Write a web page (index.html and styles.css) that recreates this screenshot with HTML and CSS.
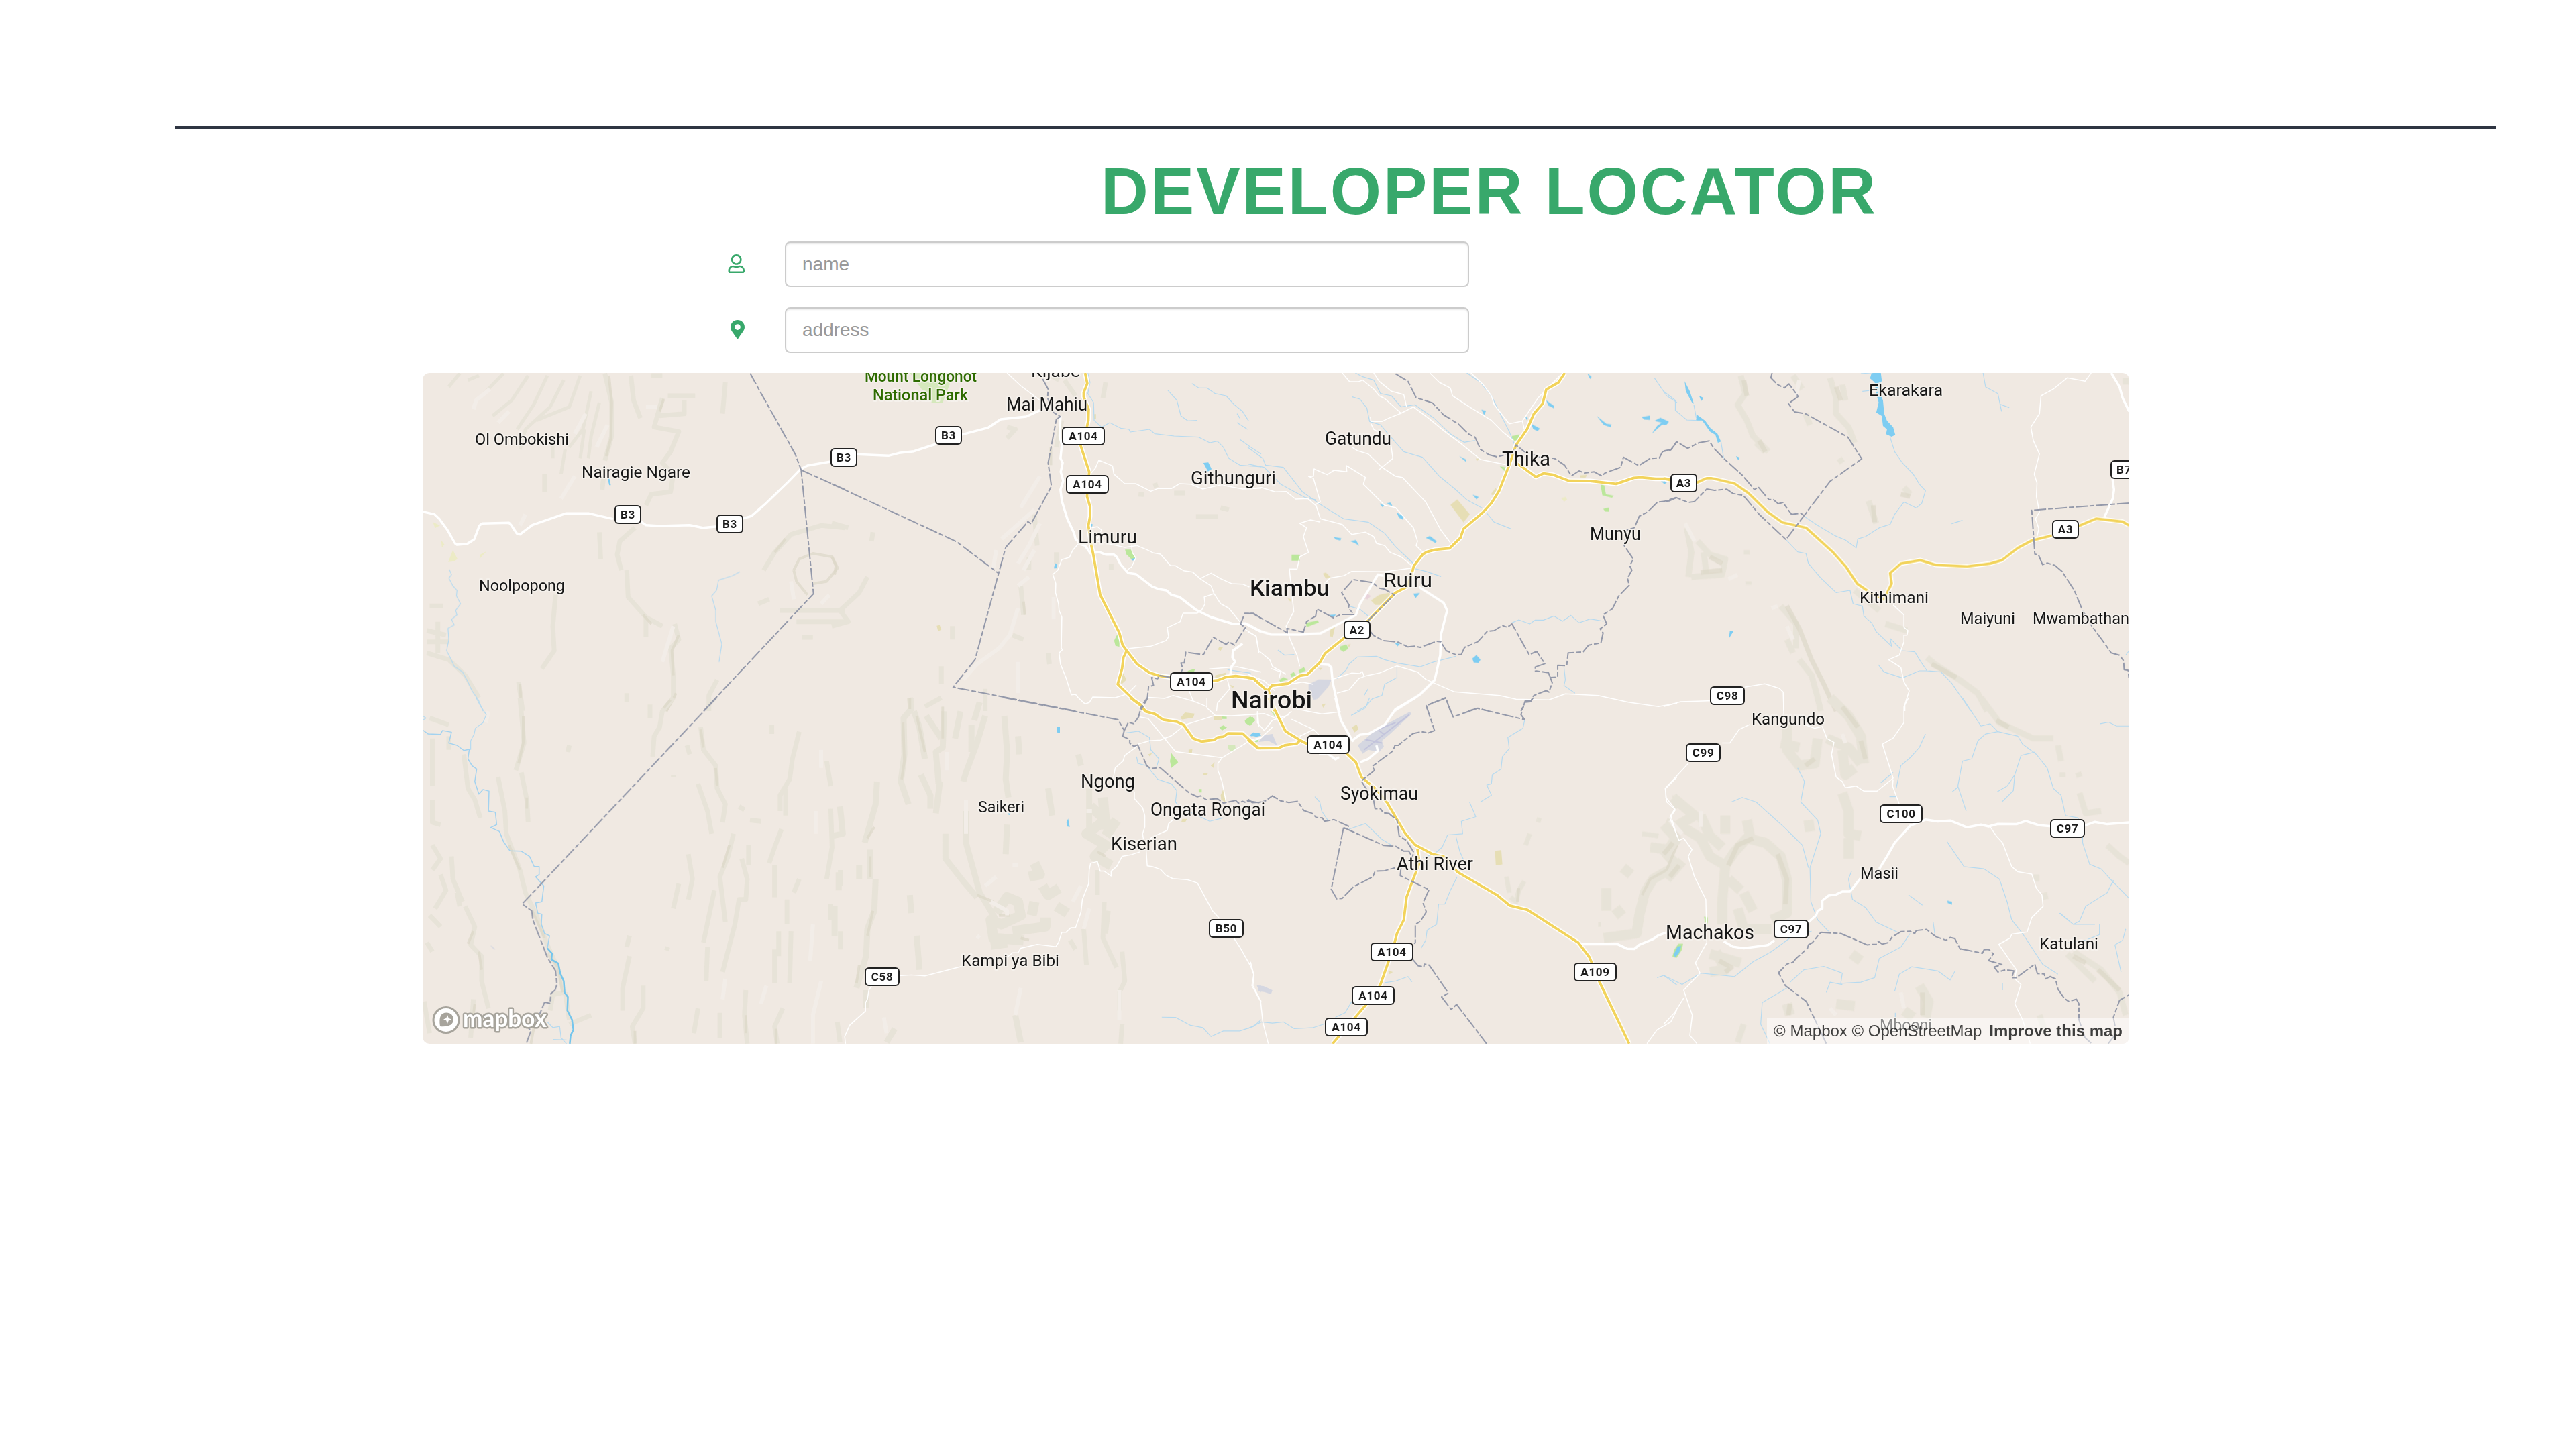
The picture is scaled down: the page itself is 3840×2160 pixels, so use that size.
FILE: index.html
```html
<!DOCTYPE html>
<html lang="en">
<head>
<meta charset="utf-8">
<title>Developer Locator</title>
<link rel="stylesheet" href="styles.css">
</head>
<body>
<header class="topbar"></header>
<main class="locator">
<h1 class="title">DEVELOPER LOCATOR</h1>
<form class="form">
  <label class="row">
    <svg class="icon" viewBox="0 0 448 512" preserveAspectRatio="xMaxYMid meet"><path d="M313.6 304c-28.700 0-42.500 16-89.600 16-47.100 0-60.800-16-89.600-16C60.200 304 0 364.200 0 438.400V464c0 26.500 21.500 48 48 48h352c26.500 0 48-21.500 48-48v-25.600c0-74.200-60.200-134.400-134.400-134.400zM400 464H48v-25.600c0-47.600 38.800-86.400 86.400-86.400 14.600 0 38.300 16 89.600 16 51.700 0 74.900-16 89.600-16 47.600 0 86.400 38.800 86.400 86.400V464zM224 288c79.500 0 144-64.500 144-144S303.500 0 224 0 80 64.500 80 144s64.500 144 144 144zm0-240c52.900 0 96 43.100 96 96s-43.100 96-96 96-96-43.100-96-96 43.100-96 96-96z"/></svg>
    <input class="field" type="text" placeholder="name">
  </label>
  <label class="row">
    <svg class="icon" viewBox="0 0 384 512" preserveAspectRatio="xMaxYMid meet"><path d="M172.268 501.670C26.970 291.031 0 269.413 0 192 0 85.961 85.961 0 192 0s192 85.961 192 192c0 77.413-26.970 99.031-172.268 309.670-9.535 13.774-29.930 13.773-39.464 0zM192 272c44.183 0 80-35.817 80-80s-35.817-80-80-80-80 35.817-80 80 35.817 80 80 80z"/></svg>
    <input class="field" type="text" placeholder="address">
  </label>
</form>
<section class="map">
<svg class="canvas" viewBox="630 556 2544 1000">
<defs>
  <g id="s2"><rect x="-19" y="-13" width="38" height="26" rx="5"/></g>
  <g id="s3"><rect x="-25" y="-13" width="50" height="26" rx="5"/></g>
  <g id="s4"><rect x="-31" y="-13" width="62" height="26" rx="5"/></g>
</defs>

<!-- hillshade -->
<g class="hills">
 <g transform="translate(620 540) scale(.40816 .33333)">
  <path class="w3" d="M320 50L240 150M410 60L350 170L280 240M480 60L430 190L370 300M540 80L490 200L400 300L380 390M600 60L560 200L440 260M640 130L610 300L560 380M670 180L640 330L630 430M160 50L120 110M230 60L190 80M500 350L500 430M545 390L530 500M615 300L600 430"/>
  <path class="w4" d="M690 50L715 180L715 330L690 440M785 60L795 170L820 250M900 160L870 290L960 310L930 400L900 450L940 500L930 580L860 590L840 640M920 150L1020 150M860 60L900 60M980 170L980 230L880 240M690 470L680 570M800 740L745 800L735 860L750 930M770 930L775 1050L840 1140L840 1230M840 1140L900 1180M670 760L675 880M470 500L470 580M510 1040L500 1180L505 1290L460 1370M375 1430L390 1560M1130 90L1120 230"/>
  <path class="w4" d="M945 1170L960 1240L930 1280L940 1400L940 1500L910 1560M1100 1420L1070 1490L1070 1560M1270 930L1310 850L1370 770L1480 730L1568 740M1250 1080L1290 1060M1330 1110L1568 1110M1390 1160L1568 1160M1410 1230L1450 1230M50 1090L100 1090M40 1200L110 1220M40 1250L120 1250M40 1300L120 1330L180 1400L230 1500M80 1160L80 1300M770 1480L770 1520"/>
  <path class="d4" d="M705 60L715 180L712 340L695 420M905 165L890 220M1380 930L1400 880L1450 855L1520 870L1540 920L1500 980L1450 990M1380 930L1390 980L1430 1040M1310 850L1350 790M960 1220L935 1290L940 1400M950 1480L915 1560M830 1130L860 1170M380 1440L385 1540"/>
  <path class="l3" d="M400 680L380 730M270 120L220 170L210 210M620 230L580 320M700 280L660 380M580 510L530 610M940 1180L900 1340M840 200L880 200M1370 980L1380 1060M1480 1080L1510 1040M340 220L300 270"/>
 </g>
 <g transform="translate(1240 540) scale(.40816 .33333)">
  <path class="w4" d="M0 720L60 740M150 760L145 800M130 960L100 1030L30 1110L60 1160L0 1180M830 80L800 60M1000 90L990 160M640 290L670 300L640 340M740 680L750 820M720 870L720 930M690 1000L700 1130M660 1220L700 1240M790 1300L795 1350M290 1500L290 1560M340 1540L400 1500M560 1460L560 1560M400 1360V1440M440 1180V1240M820 850V900M850 80L890 150M840 260L820 380M1330 690H1410M1420 650L1450 660M1250 585H1290M1120 590L1140 592M1180 540L1185 560M1020 900V930"/>
  <path class="d4" d="M0 870L15 910L10 950M800 380L800 460M285 1500L290 1560M700 1070L705 1130"/>
  <path class="l3" d="M760 510L690 650M740 660L620 790M760 720L720 820L680 900M740 840L700 930M720 960L680 1000M680 1100L650 1220L610 1280L530 1350L480 1420M810 1050V1150M600 840L590 920M680 1340V1480"/>
 </g>
 <g transform="translate(2480 540) scale(.45918 .33333)">
  <path class="w5" d="M250 60L265 140L240 190L270 260L290 330L340 400M300 360L330 400M420 60L450 120M540 70L560 160L560 230L600 290L620 360M460 230L475 280M580 100L590 170M780 560L800 590M665 620L690 720M75 740L90 850L80 960M110 800L150 860L200 880L190 950L90 960M130 850L140 960M380 1090L430 1170L430 1280M400 1240L420 1300M440 1330L480 1400L500 1500L510 1560M620 1020L700 1110M720 1170L790 1200M855 1320L880 1350L960 1420L1020 1480L1050 1560M1500 70V100M270 840V860M275 980V995M570 430L580 450"/>
  <path class="d5" d="M260 80L270 150M560 110L575 170M310 350L330 400M770 590L800 600M680 640L685 715M120 940L190 930M150 870L190 900M400 1090L440 1190L480 1330L520 1440L560 1560M870 1350L950 1410"/>
  <path class="l3" d="M70 720L100 800M210 970L240 950M400 1180L420 1240M440 80L430 150M370 1090L350 1100"/>
 </g>
 <g transform="translate(620 1040) scale(.40816 .338)">
  <path class="w4" d="M380 0L395 200L365 320M385 330L405 450L410 550M300 350L325 500L330 600L380 760L400 860L440 960L480 1090L520 1200L540 1300L500 1310L490 1380M175 250L190 400L215 450L235 530M60 180V390M60 450L60 550L90 560M50 90L120 120M120 170V230M60 650L90 710L60 760M130 700L135 800L170 900M90 780L110 850L70 930M150 860L160 920M180 920L215 1010L200 1090L240 1140L240 1250L265 1370M50 960L90 1010M40 1080L60 1120M30 1340L50 1480M210 1330L200 1500M545 1300L560 1420M560 1440L640 1400"/>
  <path class="w4" d="M940 0L900 60L890 130L870 170L865 260M855 30V90M1040 130L1050 230L1095 300L1100 400L1130 470L1120 550M990 210L1000 250M1030 380L1065 500L1080 600M995 690L1010 800L995 890M960 820L940 930M1160 600L1140 700L1110 790L1130 990M1190 710L1210 800L1205 890L1180 890L1165 1000L1120 1210M1090 850L1050 1080M1065 1100L1060 1250M1400 150L1375 270L1365 360L1330 430L1330 500M1350 400V520M1335 580L1310 660L1290 730M1310 740V880M1500 280L1515 390M1515 490L1520 660L1500 800M1400 800L1380 860M1355 890V1000M1325 1030V1140M1370 1030L1365 1260M1310 1110V1260M780 1050L770 1100M780 1140L755 1280V1380M830 1270L830 1370L790 1450L800 1526M1030 1370L1015 1480M1110 1390V1500M1205 1290L1200 1400L1210 1526M1340 1370L1310 1450L1320 1526M1180 480L1200 495M1220 540L1260 545M1300 120V160M1215 650V740M1550 760V830M1515 910V980M1550 1030V1110M920 1100L915 1115M940 340V350M560 210L555 240"/>
  <path class="d4" d="M392 80V200L375 290M405 440V490M340 650L380 760M425 940L470 1060M480 1130L520 1190L535 1300M1040 140L1050 220M1095 310L1100 390M1145 650L1120 750M210 1030L190 1085M230 1120L240 1200M430 1460L420 1526M1205 1400V1480M1315 1460V1526M800 1470V1526M930 10L905 45M215 1350L205 1450"/>
  <path class="l3" d="M1480 230L1480 310M1460 500V600M1450 1000L1440 1160M1480 1250L1450 1400L1450 1526M1130 1240L1120 1330M1280 1270L1260 1350M265 60L255 110"/>
 </g>
 <g transform="translate(1240 1040) scale(.40816 .338)">
  <path class="w5" d="M285 0L290 50L262 90L265 250L252 370L280 470M300 60L320 130L340 270M410 60L405 220L380 240L390 380M345 80L400 180M470 60L450 180M540 20L520 100M510 120V240M560 80L530 200L490 330L480 370M630 80L640 240L635 360L645 440M680 170L685 250M325 340L360 430L360 490M395 370L380 510M490 500L490 640L540 860L600 980M415 600V710L480 810L530 880M165 370L160 470L120 640M140 670V800M160 800L155 940L130 1020L125 1140L90 1280M30 480L40 600L0 610M100 740V800M285 870L290 950M310 1050L320 1200M25 770V850M10 920V1050M125 1290V1370M640 560L635 690M790 400L805 520M900 250L910 300M940 400V600M230 1460L200 1520M670 1400L690 1520"/>
  <path class="w9" d="M945 480L1000 540L930 600L1000 650L960 700L1020 740M990 440L1000 580M1040 540L1000 610M600 950L640 880L680 900L690 960L620 1000L580 980L590 1060L700 1070M660 1030L780 1010L780 970M640 1080L580 1090M740 730L760 780L720 790M770 830L790 870L830 840M740 900L730 960M820 920L860 950"/>
  <path class="w4" d="M970 760L970 870M920 1020L930 1180M995 900L990 1060L1040 1190M1060 1120L1070 1250L1050 1300L1050 1380M1060 1440L1055 1526M870 1070L890 1110M1010 940L1000 1040M20 1430L30 1520"/>
  <path class="d4" d="M285 0V50M260 110L265 280L255 360M310 80L340 240M405 40V180M530 870L590 900M610 960L650 960M155 570L130 620M140 700V790M150 940L130 1050M100 1180L90 1260M970 680L1000 700M690 1060L720 1070"/>
  <path class="l3" d="M580 900L640 940L640 960M560 830L600 790M940 930L920 1020M910 830L880 900M690 1280L670 1400M420 240V320M490 450V600M190 1410L200 1480M1050 1290V1420M950 500H930M660 740L680 740M540 1060L530 1050"/>
 </g>
 <g transform="translate(1860 1040) scale(.40816 .338)">
  <path class="w4" d="M1065 530L1060 550M1030 600L1015 650M1010 810L990 850L980 900L960 880M945 790L955 860M1530 540L1568 560M1440 600L1500 610M1560 430V490M1280 1000L1290 1000"/>
  <path class="w9" d="M1568 620L1530 690L1568 740L1480 800L1450 860L1430 960L1420 1040L1300 1060M1470 660L1540 670M1370 750L1400 780M1310 840L1310 940M1340 960L1370 930"/>
  <path class="d4" d="M1568 650L1530 760L1470 800L1440 870M990 840L985 900"/>
 </g>
 <g transform="translate(2480 1040) scale(.45918 .338)">
  <path class="w9" d="M540 0L600 80L640 170L650 290M530 180L600 220L640 290M580 230L590 340L620 310M400 100L400 230L440 300L490 290L500 180M380 200L440 220M580 420L600 500L600 600L640 610M600 620L600 710M470 540L475 590"/>
  <path class="w9" d="M30 440L100 520L50 560L120 620L150 700L200 740L230 680L270 620L330 640L380 700L400 800L400 950L350 980M120 520L150 610L190 660M200 520L200 600M270 540L280 610M0 560L40 620L0 700M60 720L10 800M200 740L190 900L190 1000M210 800L250 850M260 860L290 940M240 930L260 1020L350 1020M170 1120L200 1200L150 1210M150 1130L250 1170M610 1130L640 1160M400 1350L410 1400M560 1350L620 1360M830 1270L860 1340L850 1410M780 1380L810 1410"/>
  <path class="w5" d="M1030 0L1090 110L1200 180L1265 180M1280 210L1290 280M1295 330V350M1350 420L1370 510L1420 500M1440 650L1480 700L1511 730M1210 780V810M1235 860L1240 890M1310 1130L1400 1250M1330 1120L1420 1200L1480 1300L1500 1400M260 1440L240 1520M1220 1400L1240 1480M1345 330L1350 350"/>
  <path class="d5" d="M580 40L630 130M640 190L655 270M490 270L460 300M370 690L400 800L395 910M30 640L0 690M50 740L20 790M180 1160L220 1190L200 1210M410 1350L405 1400M840 1300V1400M1330 1140L1370 1170M1410 1200L1480 1290M210 740L240 650L290 620M1080 100L1120 130"/>
  <path class="l3" d="M120 500V570M770 1300L780 1370M20 540L60 600M580 160L590 200M540 1370L560 1400"/>
 </g>
</g>

<!-- land use -->
<g transform="translate(620 540) scale(.40816 .33333)">
 <path class="pale" d="M62 715L88 730L70 742ZM92 795L104 815L95 828ZM135 840L152 880L140 890L118 893ZM235 860L258 845L232 880Z"/>
 <path class="lake" d="M704 505L712 550H706L701 525Z"/>
</g>
<g transform="translate(1240 540) scale(.40816 .33333)">
 <path class="park" d="M285 48L340 140L365 180L405 180L430 100L430 48Z"/>
 <path class="green" d="M1071 838L1092 838L1110 875L1095 882L1075 858ZM1040 1222L1050 1222V1272L1036 1268L1031 1245ZM1300 1380L1327 1370L1322 1388H1300Z"/>
 <path class="sand" d="M383 1178L394 1175L400 1196L388 1202ZM958 232H965V252H958ZM1062 1385L1076 1420L1058 1440L1053 1425ZM1415 1272L1428 1275L1420 1290L1410 1285ZM1400 1400L1438 1388V1400L1400 1412ZM1455 1442L1470 1450L1462 1458Z"/>
 <path class="lake" d="M1357 450L1375 448L1387 478L1370 492L1350 492L1370 480ZM945 720L953 725L950 738ZM815 898L824 905L820 922L811 922ZM1090 880L1111 875L1100 887Z"/>
</g>
<g transform="translate(1860 540) scale(.40816 .33333)">
 <path class="green" d="M965 330L993 323L990 345L975 352L965 340ZM920 465L943 470L938 487ZM1288 545L1302 550L1308 590L1337 597L1330 606L1295 595ZM1298 655L1320 650V668L1305 667ZM160 861H190V887H160ZM212 1165L255 1155L260 1163L215 1185ZM338 1270L360 1262L368 1280L350 1295L337 1285ZM185 1378L205 1363L212 1378L190 1392ZM155 1395L168 1385L176 1400L160 1408ZM115 1420L130 1408L148 1418L118 1430Z"/>
 <path class="sand" d="M740 638L765 613L811 680L788 716ZM888 590L905 562L910 570L897 597ZM1215 505L1240 503L1232 518L1213 515ZM833 430L845 432L836 443ZM450 1065L480 1040L517 1030L520 1050L490 1085L465 1085ZM274 945L285 940L303 962L285 967ZM303 1185L319 1182L310 1230L299 1225ZM362 1263L376 1260L370 1275ZM257 1368L273 1366L265 1377ZM270 1530L284 1528L275 1545ZM145 1055L158 1060L155 1070Z"/>
 <path class="pale" d="M1145 608L1160 602L1167 615L1155 623Z"/>
 <path class="pink" d="M425 1055L436 1035L450 1045L437 1060Z"/>
 <path class="airport" d="M222 1440L260 1418L305 1420L295 1450L255 1505L240 1510L230 1480L222 1470Z"/>
 <path class="lake" d="M1240 50L1256 65L1250 75ZM1090 170L1118 195V206L1097 193ZM853 212L870 218L863 236ZM1035 275L1067 297L1058 308L1042 298ZM1014 243L1023 250L1020 262ZM1274 240L1310 275L1329 278L1325 291L1300 280ZM1438 245L1470 238L1468 258L1448 256ZM1485 262L1507 248L1538 265L1530 279L1512 280L1475 320L1495 285L1512 270ZM772 420L797 435V445ZM821 592L843 602L836 614ZM481 632L499 640L492 648ZM506 632L520 627L529 643ZM544 672L570 690L566 703L552 695ZM650 785L665 777L690 800L686 809L670 797ZM314 781L342 787L338 797L320 792ZM375 800L395 795L407 820L390 808ZM605 1035L629 1032L612 1056ZM820 1325L835 1309L850 1330L842 1345L825 1342ZM296 1130L322 1128L312 1144ZM537 1255L556 1258L547 1270ZM1508 530L1530 537L1522 545Z"/>
</g>
<g transform="translate(2480 540) scale(.45918 .33333)">
 <path class="lake" d="M675 48L705 48L708 80L700 130L712 170L716 230L725 262L745 290L752 325L740 333L722 322L725 300L712 285L708 240L690 225L698 180L690 140L685 90L670 72ZM68 85L85 130L98 185L92 180L72 130ZM108 235L135 262L152 295L175 320L186 355L176 360L168 325L150 310L125 260L105 260ZM115 150L130 160L122 173ZM235 420L248 427L242 437ZM0 262L17 270L0 282ZM215 1200L228 1200L212 1235ZM0 530L10 538L2 543Z"/>
</g>
<g transform="translate(620 1040) scale(.40816 .338)"><path class="airport" d="M275 1093L290 1109L286 1111L273 1096Z"/></g>
<g transform="translate(1240 1040) scale(.40816 .338)">
 <path class="green" d="M1240 245L1265 285L1240 310L1235 280ZM1508 100L1528 83L1545 95L1528 125L1510 112ZM1415 130L1430 122L1443 132L1425 145ZM1340 403H1351V418H1340ZM1426 83L1442 84V94H1426ZM1536 185L1560 185L1550 198Z"/>
 <path class="sand" d="M1272 90L1290 65L1325 70L1320 88L1280 96ZM1303 230L1317 226L1315 245H1303ZM1155 250L1170 243L1162 260ZM1384 300L1398 285L1394 310ZM1355 335L1374 332L1370 343H1355ZM1420 430L1431 400L1438 462L1422 450ZM1280 535L1298 535L1290 550H1276ZM1396 83H1425V100H1396Z"/>
 <path class="lake" d="M821 128L833 130V155L823 153ZM857 550L863 533L869 570L859 568ZM1526 165L1558 155L1568 168L1550 172ZM637 510H654L648 518Z"/>
 <path class="airport" d="M1552 1270H1568V1300Z"/>
 <path class="park" d="M1447 210L1473 208L1475 230L1460 240L1447 225Z"/>
</g>
<g transform="translate(1860 1040) scale(.40816 .338)">
 <path class="airport" d="M402 210L470 140L592 62L598 72L520 160L490 190L497 215L480 240L440 230L420 248ZM35 1270L58 1272L90 1290L85 1308L60 1298L40 1295ZM60 165L90 160L97 180L107 210L75 190L40 195Z"/>
 <path class="runway" d="M425 230L590 75M455 150L540 110M430 185L490 200M480 145L500 165"/>
 <path class="sand" d="M903 675L926 672L930 735L906 740ZM380 130L398 118L405 138L390 153ZM512 1203L530 1210L518 1220Z"/>
 <path class="green" d="M0 95L18 85L28 100L10 122L0 120ZM18 188L35 183L38 195ZM85 60L97 62L100 85Z"/>
 <path class="lake" d="M8 165L20 153L48 158L40 168L12 170Z"/>
</g>
<g transform="translate(2480 1040) scale(.45918 .338)">
 <path class="green" d="M48 1085L63 1085L58 1115L42 1147L28 1142L35 1110ZM131 965L143 968V995L134 990Z"/>
 <path class="lake" d="M45 1098L57 1095L50 1125L38 1144L32 1135ZM921 895L936 900V913L922 905Z"/>
</g>

<!-- rivers -->
<g class="river">
 <path transform="translate(620 540) scale(.40816 .33333)" d="M122 927L130 950L120 965L135 1000L150 1020L148 1045L163 1080L145 1110L150 1130L130 1150L140 1175L117 1190L120 1240L112 1290L125 1320L140 1360L170 1385L190 1430L205 1470L228 1510L245 1560M1183 937L1155 955L1105 975L1098 1020L1080 1045L1095 1110L1095 1160L1117 1260L1107 1340"/>
 <path transform="translate(1240 540) scale(.40816 .33333)" d="M935 48L943 90L935 140L956 180L958 260L985 290L1015 270L1055 295L1085 300L1090 312L1160 300L1180 320L1250 330L1340 335L1380 360L1408 353L1430 380L1450 430L1490 460L1568 468M1227 125L1260 170L1275 240L1300 262L1335 260M1315 95L1340 115L1370 115L1400 140L1440 150L1470 190L1500 220L1522 262M1480 230L1490 250M1480 270L1518 300M1490 345L1530 380L1568 410M1445 1375L1530 1390"/>
 <path transform="translate(1860 540) scale(.40816 .33333)" d="M393 48L420 65L460 80L485 140L525 150L560 200L610 190L680 250L740 320L790 358L830 350M382 155L410 165L435 205L445 265L485 280L530 345L570 400L638 425L700 510L760 570L800 615L860 655L900 715L962 745M800 48L850 90L890 150L930 250L955 310L975 370M0 380L55 430L65 460L130 470L200 580L270 640L350 700L440 715L500 765L540 825L605 900M0 455L60 470L120 545L210 605L250 615M600 920L650 935L706 958M1485 70L1530 150L1568 180M370 1090L410 1105L450 1145M965 1165L990 1152L1030 1170L1050 1153L1080 1153L1118 1135L1150 1158L1180 1132L1210 1165L1250 1148L1300 1158M110 1287L135 1310L170 1307M325 1415L360 1375L370 1350L400 1318L470 1315L500 1330L545 1345L630 1362L680 1340L760 1315M545 1360L545 1410L500 1440L490 1490L455 1505L430 1540L400 1560M440 1460L425 1490M1155 1365L1160 1420L1155 1445L1195 1480"/>
 <path transform="translate(2480 540) scale(.45918 .33333)" d="M0 130L38 170L38 215L75 258L105 260M98 190L106 250M186 355L195 430M640 48L680 52M735 335L750 400L775 450L810 500L830 545L850 575L838 630L820 652L780 625L750 680L735 725L700 740L655 780L630 790L625 830L590 795L555 775L500 730L460 693M397 793L435 848L462 855L470 900L510 965L560 1030L605 1020L615 1080L645 1090L650 1135L675 1165L690 1205L740 1270L735 1235L775 1290L815 1295L835 1340L855 1380L900 1385L935 1435L997 1560M697 1353L715 1385L775 1412L830 1380L855 1380M1037 48L1045 110L1085 140L1097 220M1092 188L1122 203M935 722L970 707M645 130L680 125M1500 1310L1511 1290"/>
 <path transform="translate(620 1040) scale(.40816 .338)" d="M220 0L235 35L257 75L245 110L217 135L213 160L200 190L200 230M24 80L37 90L24 100"/>
 <path class="deep" transform="translate(620 1040) scale(.40816 .338)" d="M24 142L45 160L90 162L97 145L130 152L120 200L150 210L175 233L195 228L190 270L205 300L222 315L215 370L230 425L245 405L267 412L265 500L290 505L295 560L273 573L305 590L320 635L343 675L385 677L415 700L432 745L450 745L450 780L437 790L467 830L460 900L437 905L445 950L460 955L458 1000L470 1040L488 1050L480 1105"/>
 <path class="blue" transform="translate(620 1040) scale(.40816 .338)" d="M480 1105L497 1128L495 1155L520 1172L527 1215L540 1250L543 1300L555 1320L553 1380L570 1420L575 1465L565 1490L562 1526"/>
 <path transform="translate(620 1040) scale(.40816 .338)" d="M480 1430L500 1455L525 1450L530 1500L550 1526M500 1508L550 1510"/>
 <path transform="translate(1240 1040) scale(.40816 .338)" d="M1075 155L1120 148L1160 175L1165 230L1195 270L1185 310M1113 260L1118 290L1150 300L1190 360L1240 380L1260 410L1255 460L1270 480L1300 500L1380 545L1430 530M1205 1409L1255 1410L1310 1445L1355 1455L1385 1495L1430 1470L1490 1470L1540 1450L1568 1420"/>
 <path transform="translate(1860 1040) scale(.40816 .338)" d="M1012 95L1005 135L950 175L955 225L930 260L925 315L893 340L890 380L873 385L890 430L850 460L810 460L833 525L780 545L785 600L730 605L710 660L680 690L640 705M760 612L775 680L790 720M765 790L740 850L720 910L697 910L690 1000L655 1025L650 1070L633 1105M245 437L263 460L270 500L292 540M370 580L430 555L460 590L490 625L525 650M500 1257L540 1250L585 1230L600 1253M0 1460L50 1430L90 1435L130 1430L170 1460L240 1455L290 1435M320 1410L355 1390L380 1340M378 78L430 45L445 0M1495 1235L1520 1225L1568 1268"/>
 <path transform="translate(2480 1040) scale(.45918 .338)" d="M970 0L1030 125L1060 115L1085 150L1150 170L1165 205L1210 250L1245 310L1265 400L1290 430L1305 520L1345 530L1360 580L1360 640L1383 735L1420 755L1450 800L1511 885M1085 150L1045 160L1020 190L1000 270L970 280L955 390L982 500M955 395L937 415M1205 240L1160 255L1140 340L1115 390L1083 415M1140 340L1135 410L1098 460M1460 805L1440 860L1370 920L1350 985L1330 1000L1287 950M850 160L830 220L800 265L770 300L755 400M705 375L745 330M733 437L755 437M435 310L457 370L445 460L500 540L510 600L475 750L478 900L500 980L535 1030M220 460L255 440L300 460L390 570L450 650L470 750M610 765L600 800L613 890L655 925L690 990L760 1035M920 635L975 745L1040 755L1090 800L1115 900L1130 980L1165 1040L1230 1175L1280 1220M795 870L840 915M1417 115L1445 108L1470 125L1511 125M0 1225L60 1265L120 1215L230 1230L290 1165L350 1120L410 1060L480 1030M410 1255L455 1200L520 1185L580 1215L575 1260L640 1255L685 1235L700 1150L770 1100L800 1040M528 1300L540 1255L580 1265M750 1295L765 1220L805 1187L890 1205L930 1245L945 1208M400 1280L320 1345L315 1440L345 1526M875 990L880 1040M1415 1000L1415 1045L1370 1070L1310 1080M1500 1020L1490 1070L1465 1090L1485 1210M1285 950L1330 1000L1400 1000M752 1390V1410M1100 1260V1290"/>
</g>

<!-- minor and major roads -->
<g class="minor">
 <path transform="translate(1240 540) scale(.40816 .33333)" d="M640 48L690 105L760 170M948 495L962 475L975 438L1025 463L1030 500L1070 543L1110 543L1165 577L1190 565L1240 565L1270 543L1310 545L1355 567L1420 548L1500 567L1568 563M950 740L970 735L985 750L970 790M900 812L880 840L868 872L840 883L825 930L807 948L818 990L817 1030L828 1080L830 1110L840 1140L838 1280L843 1285L830 1300L835 1350L855 1410L875 1487L890 1485L900 1500L925 1528L940 1522L953 1497L1035 1500L1080 1483L1112 1443M970 800L1070 828L1115 820L1150 838L1175 853L1200 858L1237 910L1255 910L1285 932L1318 938L1345 968L1385 1000L1395 1033L1420 1080L1450 1100L1490 1160M1345 968L1385 943L1420 968L1460 990L1500 992L1525 1005M1395 1035L1360 1050L1363 1080L1350 1110L1335 1122L1283 1122L1272 1160L1225 1187L1230 1228L1220 1245L1165 1270L1085 1280M1095 820L1097 850L1110 875L1095 915L1078 930M1510 1195L1550 1225L1560 1300M1378 1372L1480 1362L1568 1385M1150 1498L1215 1503L1247 1490L1320 1515L1370 1540M1305 1470L1320 1515M1445 1420L1453 1460L1408 1525L1405 1560"/>
 <path transform="translate(1860 540) scale(.40816 .33333)" d="M345 48L372 87L405 87L420 80L460 120L480 150L500 162L560 228L515 250L490 265L450 265L448 245M460 48L480 85L525 130L570 145L580 200M560 228L605 200L660 250L720 310L780 365L850 435L950 460M665 48L700 90L740 115L748 150L810 200L890 260L930 310L970 350M815 48L860 100L890 150L900 190L955 275L1003 263L1060 160L1140 60M1003 263L1010 300M450 275L460 300L520 345L530 430L480 480M380 380L400 395L440 410L490 470L540 510L565 515L650 625L705 750L740 807M360 462L430 515L422 545L500 640L540 650L605 740L620 800L615 820L640 850M360 462L362 490L315 483L290 503L242 477L240 510L222 510L240 520L265 625L248 635L265 700L345 725L380 770L430 760L460 780L470 810L500 820L520 850L560 870L600 910M0 567L50 560L100 580L140 578L175 612L220 610L248 640M265 715L230 705L190 720L215 740L203 780L222 850L190 870L180 925L152 925L168 1115L140 1180L155 1240L180 1310L190 1360M600 920L500 937L380 935L350 955L300 965L280 990M0 1205L30 1225L40 1290L80 1330L90 1360L140 1395M85 1370L120 1385L115 1410M325 1480L370 1465L405 1415L430 1403L480 1390L545 1358L620 1385L650 1418L755 1474L920 1490L980 1507L1100 1510L1160 1483L1280 1490L1390 1520L1500 1540L1568 1525M305 1420L380 1390L410 1392L418 1382L425 1405M150 1440L200 1430L240 1440M0 1395L60 1425L100 1470"/>
 <path transform="translate(2480 540) scale(.45918 .33333)" d="M1388 48L1368 85L1310 70L1265 120L1225 150L1220 230L1192 290L1200 350L1220 410L1203 500L1212 540L1210 600L1220 670L1207 700L1218 745L1210 790M745 1085L780 1130L780 1185L793 1200L790 1220L780 1220L780 1250L765 1310L730 1330L770 1365L780 1430L797 1470L783 1530V1560M263 1453L328 1438L375 1458L388 1475L390 1560M0 1540L55 1518L150 1514"/>
 <path transform="translate(1240 1040) scale(.40816 .338)" d="M1115 215L1070 255L1063 280L1035 310L1028 355M1105 415L1105 445L1135 485L1143 520V570L1135 600L1140 640M1255 530L1230 555L1225 585L1170 615L1155 630M1125 680L1095 692L1060 700L1040 745L1020 765V787L995 765H980L970 723L945 730L940 760L938 820L915 890L910 945L890 1015H873L855 1035H840L828 1080L818 1098L750 1088L690 1105L680 1125H660L640 1145M1148 675L1152 742L1170 745L1200 757L1220 783L1245 798L1300 803L1335 817L1390 940L1415 973M1468 1060L1490 1100L1530 1185L1542 1225L1538 1270L1568 1340M475 1185L340 1227L290 1223L245 1226M145 1272L135 1290L130 1330L123 1345V1382L65 1445L47 1495L50 1526M1118 205L1160 190L1200 187L1240 168L1290 120L1400 78L1460 80L1568 72M1125 85L1155 92L1255 238L1425 265L1520 195L1568 180M1425 265L1410 290V320L1425 370L1440 460M1370 0V45L1400 78M1555 60L1560 130"/>
 <path transform="translate(1860 1040) scale(.40816 .338)" d="M0 75L60 70L120 100L160 60M35 60L35 110L60 145L90 100L150 75M0 190L50 175L90 130M180 50L270 72L340 62M160 95L240 140L265 170M240 140L190 170M10 1165L22 1220L15 1270L47 1340L55 1430L75 1526M1568 1375L1545 1430L1495 1465L1458 1526M1568 350L1527 400V440L1560 490L1545 520L1568 610"/>
 <path transform="translate(2480 1040) scale(.45918 .338)" d="M390 0V80L400 100M280 118L245 140L215 200H190M80 290L5 400L10 460L38 495L20 530L50 630L65 620L92 670L80 700L100 790L137 890L140 1080L103 1170L118 1215L65 1290L93 1400L85 1490L108 1526M65 1325L35 1390L0 1440M460 120L490 135L515 127L530 180L553 197L545 250L560 350L580 370L590 397L625 390L650 412H693L745 355L710 205L745 178L780 110V40L795 0M745 360L743 390L765 470M1060 570L1080 610L1100 640L1130 745L1150 768L1195 778L1210 840L1228 870L1232 920L1195 970L1180 1033L1130 1043L1125 1060L1088 1088L1145 1200L1140 1240L1160 1265L1140 1350L1165 1420L1190 1526"/>
</g>
<g class="major">
 <path transform="translate(620 540) scale(.40816 .33333)" d="M24 668L68 680L85 700L115 750L143 810L150 816L187 812L213 792L232 730L242 721L340 718L348 728L368 765L380 770L425 728L547 676L632 676L720 701M820 712L840 728L890 732L1000 728L1048 740L1100 734L1190 700L1225 688L1275 635L1360 535L1405 478L1430 462L1515 444"/>
 <path transform="translate(1240 540) scale(.40816 .33333)" d="M90 412L207 418L245 406L300 398L380 366M470 325L570 293L617 255L710 243L760 215M835 240L832 330L840 370L835 430L843 450L836 490L845 530L835 570L840 620L860 700L885 765L890 790L910 815L925 820L945 855L975 848L1000 860H1030L1040 870L1055 905L1083 943L1110 947L1170 1003L1195 1015L1222 1020L1240 1040L1270 1050L1330 1107L1385 1140L1465 1170L1510 1168L1568 1205M1455 1400L1460 1360L1473 1340L1463 1320L1465 1290L1500 1258"/>
 <path transform="translate(1860 540) scale(.40816 .33333)" d="M0 1172L40 1200L85 1217L190 1218L265 1212L300 1190L395 1130L410 1080L475 950L500 955M625 1005L715 1075L728 1110L705 1220L703 1310L683 1420L630 1485L535 1560M265 1350L295 1353L305 1365L310 1430L333 1560"/>
 <path transform="translate(2480 540) scale(.45918 .33333)" d="M1453 48L1480 110L1490 160L1511 220M1457 520L1462 570L1458 610L1430 695"/>
 <path transform="translate(1860 1040) scale(.40816 .338)" d="M320 0L340 100L385 195M385 185L410 163L440 160L500 120L540 50L612 0M410 285L440 270L475 235L470 210M260 250L290 245L320 272L333 262M1215 1087H1350L1385 1107L1412 1108L1430 1090L1480 1065L1500 1048L1530 1035"/>
 <path transform="translate(2480 1040) scale(.45918 .338)" d="M700 755L725 700L750 640L800 565L850 538L890 546L930 542L985 572L1030 560L1055 568L1085 557L1145 558L1175 544L1220 563L1265 568M1365 565L1400 548L1440 558L1511 550M640 795L605 855L580 855L560 868L535 873L515 895V930L500 940L495 960L470 990M360 1070L340 1090L320 1095L260 1105L225 1098L195 1075"/>
</g>
<g class="trunk">
 <g id="hw">
 <path transform="translate(1240 540) scale(.40816 .33333)" d="M925 48L933 95L920 135V155L938 210L937 260L928 310L908 370L940 490L932 600L943 645L943 690L937 730L948 820L955 860L980 1040L1050 1210L1062 1265L1077 1290L1115 1350L1160 1388L1195 1402L1250 1411M1390 1425L1410 1422L1440 1408L1475 1403L1540 1414L1568 1445M1077 1290L1065 1320L1060 1370L1044 1440L1105 1512L1127 1530L1145 1560"/>
 <path transform="translate(1860 540) scale(.40816 .33333)" d="M1158 48L1135 90L1090 122L1077 185L1045 230L1020 300L980 370L955 460L918 575L890 630L860 670L788 745L777 785L737 832L685 838L655 848L640 858L607 910L597 955L580 1005L540 1030L440 1155L350 1235L282 1303L263 1343L217 1397L190 1402L147 1437L88 1446L75 1465L97 1560M0 1411L20 1414L70 1468M980 450L1005 470L1052 513L1080 497L1115 503L1173 530L1250 531L1345 544L1410 517L1435 515L1490 521H1525L1568 530"/>
 <path transform="translate(2480 540) scale(.45918 .33333)" d="M0 519L30 530M105 540L140 518L155 518L230 542L275 585L338 670L385 716L462 740L550 850L592 915L628 990L670 1030L715 1060L740 990L735 943L770 900L833 885L883 906L985 913L1060 900L1098 885L1150 830L1195 797L1260 775M1345 733L1405 699L1490 713L1511 730"/>
 <path transform="translate(1240 1040) scale(.40816 .338)" d="M1090 0L1127 33L1145 60L1180 72L1210 97L1260 106L1285 120L1320 180L1350 193L1395 187L1410 175L1430 172L1447 157L1500 158L1555 220L1568 223"/>
 <path transform="translate(1860 1040) scale(.40816 .338)" d="M75 0L97 50L138 148L190 187L250 225M0 185L37 223L113 222L135 210L180 202L192 187M360 245L395 285L415 350L470 405L510 465L575 598L610 648L675 690L720 703L765 768L910 870L957 917L1022 936L1207 1080L1248 1145L1285 1255L1393 1526M620 668L627 730L595 830L580 880L570 980L545 1040L530 1110L483 1270L435 1350L310 1526"/>
 </g>
 <use class="gold" href="#hw"/>
</g>

<!-- county boundaries -->
<g class="border">
 <path transform="translate(620 540) scale(.40816 .33333)" d="M1221 50L1252 120L1385 410L1407 482L1452 1035L1050 1560M1407 482L1568 570"/>
 <path transform="translate(1240 540) scale(.40816 .33333)" d="M0 544L455 802L608 943M770 75L790 120L788 160L810 225L835 243L820 255L790 450L802 555L728 722L716 713L635 828L523 1330L443 1453L890 1560M1568 1145L1540 1123H1508L1493 1170L1510 1187L1470 1265L1450 1250L1440 1262L1393 1230L1357 1308L1293 1297L1287 1345L1275 1345L1282 1370L1270 1400M1240 1410L1195 1400L1190 1415L1168 1410L1175 1445L1157 1450L1152 1505L1127 1560"/>
 <path transform="translate(1860 540) scale(.40816 .33333)" d="M540 52L585 85L615 158L675 182L715 235L770 277L805 320L830 335L850 390L880 413L910 423L970 405L980 370L1010 400L1070 425L1120 430L1157 460L1182 508L1210 486L1230 495L1265 490L1293 508L1305 495L1362 470L1372 425L1428 462L1470 430L1503 428L1515 400L1545 392L1568 355M1568 605L1540 620L1497 625L1460 670L1430 688L1412 740L1385 750L1375 820L1408 880L1395 910L1403 930L1387 965L1393 997L1355 1045L1332 1102L1297 1130L1311 1170L1287 1192L1298 1210L1290 1255L1245 1265L1225 1295L1170 1300L1165 1357L1132 1355V1408L1105 1410L1112 1433L1100 1475L1090 1468L1045 1490L1033 1518L1013 1520L998 1560M1105 1410L1098 1388L1050 1380V1363L1085 1348L1055 1293L1028 1308L965 1170L948 1185L930 1177L900 1200L875 1203L840 1250L792 1275L780 1307H758L725 1290L705 1250L690 1248L630 1275L610 1270L585 1273L550 1252L495 1245L460 1222L445 1200M440 1155L535 1040L500 1015L480 1010L455 985L385 972L343 1030L370 1085L368 1100L388 1128H340L312 1143L252 1103L248 1135L215 1160L203 1207L143 1190L145 1210L20 1125L0 1123M740 1560L723 1500L652 1535L658 1560M805 1560L840 1547L880 1560"/>
 <path transform="translate(2480 540) scale(.45918 .33333)" d="M352 48L348 70L370 100L392 115L407 97L437 153L405 185L425 222L460 230L598 335L643 432L540 533L397 793L310 680L258 595L225 587L205 568L165 573L140 567L100 623L80 627L40 605L0 623M0 397L25 390L42 355L78 385L115 360L148 352L163 385L195 430L255 505L295 570L307 558L342 615L355 613L372 633L387 627L415 680L445 675L460 690M1511 630L1195 662L1205 858L1217 862L1230 905L1245 898L1270 908L1293 935L1333 1020L1360 1110L1390 1180L1425 1245L1453 1300L1480 1310L1493 1335L1495 1375L1508 1378L1511 1420"/>
 <path transform="translate(620 1040) scale(.40816 .338)" d="M1098 0L388 910L423 940L427 980L480 1145L510 1205L515 1265L508 1290L493 1305L490 1348L470 1343L435 1445L412 1458L420 1470L403 1526"/>
 <path transform="translate(1240 1040) scale(.40816 .338)" d="M630 0L1045 97L1068 145L1083 108L1103 115L1120 85L1130 40L1152 0M1068 145L1062 170L1088 185V200L1103 215L1117 208L1150 300L1165 313L1198 308L1305 420L1335 437L1347 433L1367 450L1407 445L1430 465L1475 453L1485 465L1500 457L1512 462L1522 450L1535 463L1568 460"/>
 <path transform="translate(1860 1040) scale(.40816 .338)" d="M0 455L40 463L65 455L90 433L120 455L150 462L182 457L205 498L235 510L250 528L272 530L280 545L315 538L370 568M350 573L305 845L325 887L345 885L387 833L457 790L465 765L500 763L540 750M350 573L497 652L540 655L570 677H588L602 705L605 680L580 630L553 610L545 540L515 510L495 508L485 490H465L460 455L415 368L463 320L455 303L530 235L538 210H550L603 158L635 150L660 155L682 145L652 35L723 2L750 85L838 47L1012 97L998 75L1013 15H1033L1043 0M560 745L557 785L662 847L640 905L652 945L630 987L612 1000V1080L600 1100M603 1155L623 1183L643 1187L645 1175L663 1180L733 1303L708 1320L743 1375L763 1353L872 1526"/>
 <path transform="translate(2480 1040) scale(.45918 .338)" d="M528 1526L463 1340L395 1270L373 1213L400 1175L420 1167L430 1150L467 1105L470 1090L483 1080L510 1035L575 1040L660 1090L690 1087L697 1075L710 1087L730 1080L742 1055L770 1032L800 1030L815 1040L820 1027L853 1022L885 1055L917 1070L930 1058L945 1062L965 1115V1108L1035 1127L1040 1112L1055 1110L1070 1130L1055 1160L1098 1177L1073 1188L1085 1210L1110 1200L1137 1205L1130 1235H1145L1205 1175L1213 1217L1235 1218L1240 1240L1255 1230L1272 1240L1280 1285L1300 1325L1315 1340L1340 1330L1348 1350V1420L1368 1500L1390 1526M1443 1526L1470 1480L1460 1410L1480 1335L1511 1310"/>
</g>

<!-- highway shields -->
<g class="shields">
 <g transform="translate(936 767)"><use href="#s2"/><text y="6">B3</text></g>
 <g transform="translate(1088 781)"><use href="#s2"/><text y="6">B3</text></g>
 <g transform="translate(1258 682)"><use href="#s2"/><text y="6">B3</text></g>
 <g transform="translate(1414 649)"><use href="#s2"/><text y="6">B3</text></g>
 <g transform="translate(1615 650)"><use href="#s4"/><text y="6">A104</text></g>
 <g transform="translate(1621 722)"><use href="#s4"/><text y="6">A104</text></g>
 <g transform="translate(1776 1016)"><use href="#s4"/><text y="6">A104</text></g>
 <g transform="translate(2023 939)"><use href="#s2"/><text y="6">A2</text></g>
 <g transform="translate(2510 720)"><use href="#s2"/><text y="6">A3</text></g>
 <g transform="translate(3079 789)"><use href="#s2"/><text y="6">A3</text></g>
 <g transform="translate(3166 700)"><use href="#s2"/><text y="6">B7</text></g>
 <g transform="translate(2575 1037)"><use href="#s3"/><text y="6">C98</text></g>
 <g transform="translate(2539 1122)"><use href="#s3"/><text y="6">C99</text></g>
 <g transform="translate(2834 1213)"><use href="#s4"/><text y="6">C100</text></g>
 <g transform="translate(3082 1235)"><use href="#s3"/><text y="6">C97</text></g>
 <g transform="translate(2670 1385)"><use href="#s3"/><text y="6">C97</text></g>
 <g transform="translate(1315 1456)"><use href="#s3"/><text y="6">C58</text></g>
 <g transform="translate(1828 1384)"><use href="#s3"/><text y="6">B50</text></g>
 <g transform="translate(1980 1110)"><use href="#s4"/><text y="6">A104</text></g>
 <g transform="translate(2075 1419)"><use href="#s4"/><text y="6">A104</text></g>
 <g transform="translate(2047 1484)"><use href="#s4"/><text y="6">A104</text></g>
 <g transform="translate(2007 1531)"><use href="#s4"/><text y="6">A104</text></g>
 <g transform="translate(2378 1449)"><use href="#s4"/><text y="6">A109</text></g>
</g>

<!-- place names -->
<g class="places">
 <g class="p24">
  <text x="708" y="663" textLength="140" lengthAdjust="spacingAndGlyphs">Ol Ombokishi</text>
  <text x="867" y="712" textLength="162" lengthAdjust="spacingAndGlyphs">Nairagie Ngare</text>
  <text x="714" y="881" textLength="128" lengthAdjust="spacingAndGlyphs">Noolpopong</text>
  <text x="1537" y="562" textLength="73" lengthAdjust="spacingAndGlyphs">Kijabe</text>
  <text x="2786" y="590" textLength="110" lengthAdjust="spacingAndGlyphs">Ekarakara</text>
  <text x="2772" y="899" textLength="103" lengthAdjust="spacingAndGlyphs">Kithimani</text>
  <text x="2922" y="930" textLength="82" lengthAdjust="spacingAndGlyphs">Maiyuni</text>
  <text x="3030" y="930" textLength="144" lengthAdjust="spacingAndGlyphs">Mwambathan</text>
  <text x="1458" y="1211" textLength="69" lengthAdjust="spacingAndGlyphs">Saikeri</text>
  <text x="1433" y="1440" textLength="146" lengthAdjust="spacingAndGlyphs">Kampi ya Bibi</text>
  <text x="2611" y="1080" textLength="109" lengthAdjust="spacingAndGlyphs">Kangundo</text>
  <text x="2773" y="1310" textLength="57" lengthAdjust="spacingAndGlyphs">Masii</text>
  <text x="3040" y="1415" textLength="88" lengthAdjust="spacingAndGlyphs">Katulani</text>
  <text x="2802" y="1536" textLength="78" lengthAdjust="spacingAndGlyphs">Mbooni</text>
 </g>
 <g class="p27">
  <text x="1500" y="612" textLength="121" lengthAdjust="spacingAndGlyphs">Mai Mahiu</text>
  <text x="1775" y="722" textLength="127" lengthAdjust="spacingAndGlyphs">Githunguri</text>
  <text x="1607" y="810" textLength="88" lengthAdjust="spacingAndGlyphs">Limuru</text>
  <text x="1975" y="663" textLength="99" lengthAdjust="spacingAndGlyphs">Gatundu</text>
  <text x="2370" y="805" textLength="76" lengthAdjust="spacingAndGlyphs">Munyu</text>
  <text x="1611" y="1174" textLength="81" lengthAdjust="spacingAndGlyphs">Ngong</text>
  <text x="1715" y="1216" textLength="171" lengthAdjust="spacingAndGlyphs">Ongata Rongai</text>
  <text x="1656" y="1267" textLength="99" lengthAdjust="spacingAndGlyphs">Kiserian</text>
  <text x="1998" y="1192" textLength="116" lengthAdjust="spacingAndGlyphs">Syokimau</text>
  <text x="2082" y="1297" textLength="114" lengthAdjust="spacingAndGlyphs">Athi River</text>
 </g>
 <g class="p29">
  <text x="2239" y="694" textLength="72" lengthAdjust="spacingAndGlyphs">Thika</text>
  <text x="2062" y="875" textLength="73" lengthAdjust="spacingAndGlyphs">Ruiru</text>
  <text x="2483" y="1400" textLength="132" lengthAdjust="spacingAndGlyphs">Machakos</text>
 </g>
 <text class="p34" x="1863" y="888" textLength="119" lengthAdjust="spacingAndGlyphs">Kiambu</text>
 <text class="p37" x="1835" y="1056" textLength="121" lengthAdjust="spacingAndGlyphs">Nairobi</text>
 <g class="parkname">
  <text x="1289" y="569" textLength="167" lengthAdjust="spacingAndGlyphs">Mount Longonot</text>
  <text x="1301" y="597" textLength="142" lengthAdjust="spacingAndGlyphs">National Park</text>
 </g>
</g>

<!-- provider mark -->
<g class="mark">
 <circle class="ring" cx="665" cy="1520.500" r="19"/>
 <path class="drop" d="M656 1530C654 1516 657 1509.500 666 1509.500A9.800 9.800 0 0 1 676 1519.500C676 1528 668 1531 656 1530Z"/>
 <path class="star" d="M667 1513L668.800 1517.800L673 1519.500L668.800 1521.200L667 1526L665.200 1521.200L661 1519.500L665.200 1517.800Z"/>
 <text x="690" y="1531" textLength="125" lengthAdjust="spacingAndGlyphs">mapbox</text>
</g>
</svg>
<div class="attribution"><span>© Mapbox © OpenStreetMap</span><strong>Improve this map</strong></div>
</section>
</main>
</body>
</html>
```

FILE: styles.css
```css
* { box-sizing: border-box; }
body {
  margin: 0;
  background: #fff;
  font-family: "Liberation Sans", Arial, sans-serif;
}
.topbar {
  height: 192px;
  margin: 0 119px 0 261px;
  border-bottom: 4px solid #2f3542;
}
.title {
  margin: 38px 0 20px 1641px;
  font-size: 98px;
  line-height: 110px;
  letter-spacing: 3px;
  white-space: nowrap;
  color: #38a86b;
}
.form {
  display: flex;
  flex-direction: column;
  gap: 30px;
  margin-left: 1060px;
}
.row {
  display: flex;
  align-items: center;
  gap: 60px;
}
.icon {
  width: 50px;
  height: 28px;
  fill: #38a86b;
  margin-bottom: 3px;
}
.field {
  width: 1020px;
  height: 68px;
  padding: 12px 24px;
  border: 2px solid #ccc;
  border-radius: 8px;
  box-shadow: inset 0 2px 2px rgba(0, 0, 0, .075);
  font: 28px/40px "Liberation Sans", Arial, sans-serif;
  color: #555;
}
.field::placeholder { color: #999; opacity: 1; }

.map {
  position: relative;
  width: 2544px;
  height: 1000px;
  margin: 30px 0 0 630px;
  border-radius: 10px;
  overflow: hidden;
  background: #f0e9e2;
}
.canvas { display: block; width: 2544px; height: 1000px; }
.canvas path { vector-effect: non-scaling-stroke; stroke-linejoin: round; }

.hills { opacity: .85; }
.hills path { fill: none; stroke-linecap: butt; }
.hills .w3, .hills .w4, .hills .w5, .hills .w9 { stroke: #e6e2d6; }
.hills .w3 { stroke-width: 5px; }
.hills .w4 { stroke-width: 7px; }
.hills .w5 { stroke-width: 9px; }
.hills .w9 { stroke-width: 15px; }
.hills .d4, .hills .d5 { stroke: #d9d4c3; opacity: .7; }
.hills .d4 { stroke-width: 4px; }
.hills .d5 { stroke-width: 7px; }
.hills .l3 { stroke: #f3eee9; stroke-width: 6px; }

.park { fill: #d5e8bc; }
.green { fill: #bbe79b; }
.sand { fill: #e6deb5; }
.pale { fill: #ecebc6; }
.pink { fill: #e8d3da; }
.airport { fill: #d5d7e1; }
.runway { fill: none; stroke: #c3c4dc; stroke-width: 2px; }
.lake { fill: #7ecdf2; }

.river path { fill: none; stroke: #b6daf0; stroke-width: 1.200px; }
.river .deep { stroke: #a2d2f0; stroke-width: 1.500px; }
.river .blue { stroke: #75c5ec; stroke-width: 2.500px; }

.minor path { fill: none; stroke: #fff; stroke-width: 1.500px; }
.major path { fill: none; stroke: #fff; stroke-width: 3.500px; }
.trunk { fill: none; stroke: #fff; stroke-width: 7px; }
.trunk .gold { stroke: #f2d35b; stroke-width: 3.800px; }
.border path {
  fill: none;
  stroke: #9499aa;
  stroke-width: 2px;
  stroke-dasharray: 18 3 7 3;
}

.shields use { fill: #fff; stroke: #222; stroke-width: 2px; }
.shields text {
  font: 700 17px Roboto, sans-serif;
  letter-spacing: .7px;
  text-anchor: middle;
  fill: #1c1c1c;
}
.places text {
  font-family: Roboto, sans-serif;
  fill: #161616;
  stroke: rgba(246, 242, 237, .85);
  stroke-width: 4px;
  stroke-linejoin: round;
  paint-order: stroke;
}
.p24 { font-size: 24px; }
.p27 { font-size: 27px; }
.p29 { font-size: 29px; }
.p34 { font-size: 34px; font-weight: 500; }
.p37 { font-size: 37px; font-weight: 500; }
.places .parkname text {
  font-size: 24px;
  font-weight: 500;
  fill: #2e6b00;
}

.mark .ring { fill: #fff; stroke: #a7a49c; stroke-width: 3px; }
.mark .drop { fill: #a7a49c; }
.mark .star { fill: #fff; }
.mark text {
  font: 700 37px Lato, sans-serif;
  fill: #fff;
  stroke: #a7a49c;
  stroke-width: 5px;
  stroke-linejoin: round;
  paint-order: stroke;
}
.attribution {
  position: absolute;
  right: 0;
  bottom: 0;
  display: flex;
  gap: 11px;
  padding: 0 10px;
  font-size: 24px;
  line-height: 39px;
  color: rgba(0, 0, 0, .75);
  background: rgba(255, 255, 255, .5);
  white-space: nowrap;
}
```
